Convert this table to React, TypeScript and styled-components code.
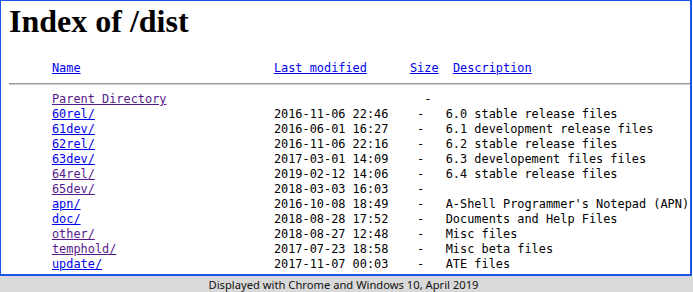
import * as React from 'react';
import styled, { createGlobalStyle } from 'styled-components';

const GlobalStyle = createGlobalStyle`
  html, body {
    margin: 0;
    padding: 0;
    background: #ffffff;
  }
`;

const Page = styled.div`
  display: flex;
  flex-direction: column;
  width: 693px;
  height: 292px;
  overflow: hidden;
`;

const Frame = styled.div`
  box-sizing: border-box;
  width: 692px;
  height: 276px;
  border-style: solid;
  border-color: #1a55e3;
  border-width: 1px 2px 2px 1px;
  padding: 0 0 0 8px;
  overflow: hidden;
  background: #ffffff;
`;

const Heading = styled.h1`
  margin: 2px 0 21px;
  font-family: 'Liberation Serif', 'Times New Roman', serif;
  font-size: 32px;
  font-weight: bold;
  color: #000000;
`;

const Listing = styled.div`
  font-family: 'DejaVu Sans Mono', 'Liberation Mono', monospace;
  font-size: 11.9px;
  line-height: 15px;
  color: #000000;
`;

const Line = styled.div`
  white-space: pre;
  padding-left: 6ch;
`;

const Rule = styled.hr`
  margin: 7px 0 7px;
  height: 0;
  border: none;
  border-top: 1px solid #9a9a9a;
  border-bottom: 1px solid #cfcfcf;
`;

const Link = styled.a<{ $visited?: boolean }>`
  color: ${(p) => (p.$visited ? '#551a8b' : '#0000ee')};
  text-decoration: underline;
  cursor: pointer;
`;

const Footer = styled.div`
  display: flex;
  align-items: center;
  justify-content: center;
  flex: 1;
  background: #d9d9d9;
  font-family: 'Noto Sans', 'Open Sans', sans-serif;
  font-size: 11.2px;
  color: #111111;
  padding-right: 6px;
`;

type Entry = {
  name: string;
  date: string;
  desc: string;
  visited?: boolean;
};

const entries: Entry[] = [
  { name: '60rel/', date: '2016-11-06 22:46', desc: '6.0 stable release files' },
  { name: '61dev/', date: '2016-06-01 16:27', desc: '6.1 development release files' },
  { name: '62rel/', date: '2016-11-06 22:16', desc: '6.2 stable release files' },
  { name: '63dev/', date: '2017-03-01 14:09', desc: '6.3 developement files files' },
  { name: '64rel/', date: '2019-02-12 14:06', desc: '6.4 stable release files', visited: true },
  { name: '65dev/', date: '2018-03-03 16:03', desc: '', visited: true },
  { name: 'apn/', date: '2016-10-08 18:49', desc: "A-Shell Programmer's Notepad (APN)" },
  { name: 'doc/', date: '2018-08-28 17:52', desc: 'Documents and Help Files' },
  { name: 'other/', date: '2018-08-27 12:48', desc: 'Misc files', visited: true },
  { name: 'temphold/', date: '2017-07-23 18:58', desc: 'Misc beta files', visited: true },
  { name: 'update/', date: '2017-11-07 00:03', desc: 'ATE files' },
];

const pad = (n: number) => ' '.repeat(Math.max(n, 0));

export default function App() {
  return (
    <Page>
      <GlobalStyle />
      <Frame>
        <Heading>Index of /dist</Heading>
        <Listing>
          <Line>
            <Link>Name</Link>
            {pad(27)}
            <Link>Last modified</Link>
            {pad(6)}
            <Link>Size</Link>
            {'  '}
            <Link>Description</Link>
          </Line>
          <Rule />
          <Line>
            <Link $visited>Parent Directory</Link>
            {pad(36)}-
          </Line>
          {entries.map((e) => (
            <Line key={e.name}>
              <Link $visited={e.visited}>{e.name}</Link>
              {pad(31 - e.name.length)}
              {e.date}
              {'    -   '}
              {e.desc}
            </Line>
          ))}
        </Listing>
      </Frame>
      <Footer>Displayed with Chrome and Windows 10, April 2019</Footer>
    </Page>
  );
}
